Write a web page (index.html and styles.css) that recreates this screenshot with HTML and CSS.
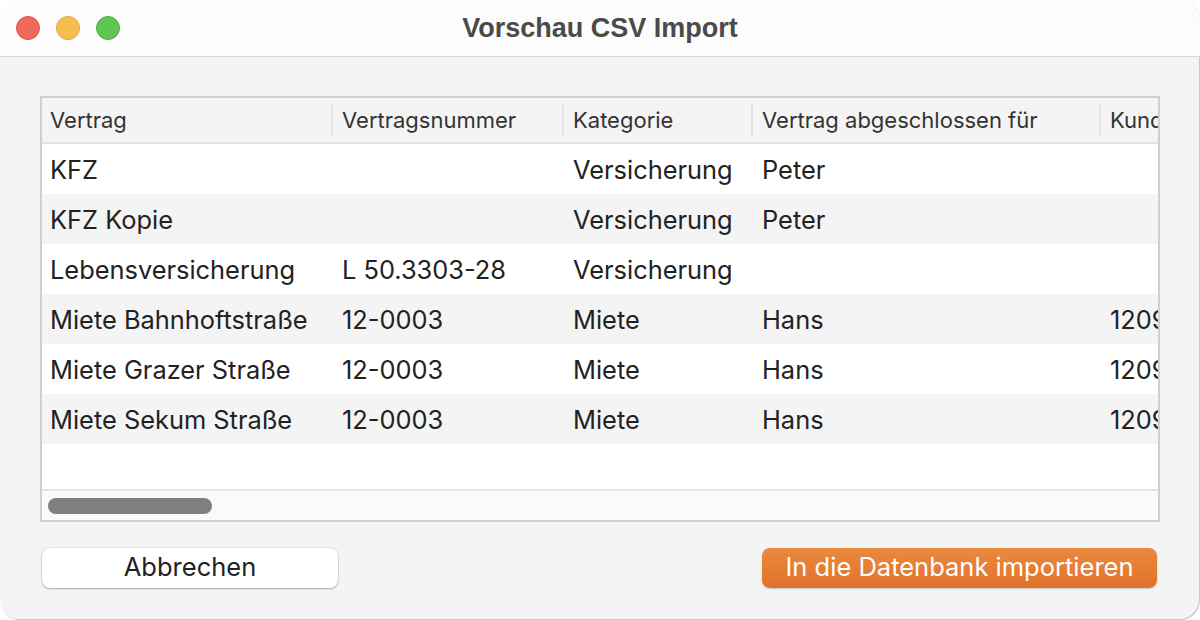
FILE: index.html
```html
<!DOCTYPE html>
<html lang="de">
<head>
<meta charset="utf-8">
<title>Vorschau CSV Import</title>
<link rel="stylesheet" href="styles.css">
</head>
<body>
<div class="window">
  <div class="titlebar">
    <div class="lights">
      <span class="light red"></span>
      <span class="light yellow"></span>
      <span class="light green"></span>
    </div>
    <div class="title">Vorschau CSV Import</div>
  </div>
  <div class="content">
    <div class="table">
      <div class="viewport">
        <div class="row head">
          <div class="cell c1">Vertrag</div>
          <div class="cell c2 sep">Vertragsnummer</div>
          <div class="cell c3 sep">Kategorie</div>
          <div class="cell c4 sep">Vertrag abgeschlossen für</div>
          <div class="cell c5 sep">Kundennummer</div>
        </div>
        <div class="row">
          <div class="cell c1">KFZ</div>
          <div class="cell c2"></div>
          <div class="cell c3">Versicherung</div>
          <div class="cell c4">Peter</div>
          <div class="cell c5"></div>
        </div>
        <div class="row alt">
          <div class="cell c1">KFZ Kopie</div>
          <div class="cell c2"></div>
          <div class="cell c3">Versicherung</div>
          <div class="cell c4">Peter</div>
          <div class="cell c5"></div>
        </div>
        <div class="row">
          <div class="cell c1">Lebensversicherung</div>
          <div class="cell c2">L 50.3303-28</div>
          <div class="cell c3">Versicherung</div>
          <div class="cell c4"></div>
          <div class="cell c5"></div>
        </div>
        <div class="row alt">
          <div class="cell c1">Miete Bahnhoftstraße</div>
          <div class="cell c2">12-0003</div>
          <div class="cell c3">Miete</div>
          <div class="cell c4">Hans</div>
          <div class="cell c5">120945</div>
        </div>
        <div class="row">
          <div class="cell c1">Miete Grazer Straße</div>
          <div class="cell c2">12-0003</div>
          <div class="cell c3">Miete</div>
          <div class="cell c4">Hans</div>
          <div class="cell c5">120945</div>
        </div>
        <div class="row alt">
          <div class="cell c1">Miete Sekum Straße</div>
          <div class="cell c2">12-0003</div>
          <div class="cell c3">Miete</div>
          <div class="cell c4">Hans</div>
          <div class="cell c5">120945</div>
        </div>
        <div class="filler"></div>
      </div>
      <div class="hscroll">
        <div class="thumb"></div>
      </div>
    </div>
    <div class="buttons">
      <button class="btn cancel">Abbrechen</button>
      <button class="btn primary">In die Datenbank importieren</button>
    </div>
  </div>
</div>
</body>
</html>
```

FILE: styles.css
```css
html, body {
  margin: 0;
  padding: 0;
  background: #ffffff;
}
body {
  font-family: "Inter", "Liberation Sans", sans-serif;
  color: #222;
}
.window {
  width: 1200px;
  height: 620px;
  border-radius: 20px;
  overflow: hidden;
  background: #f4f4f4;
  display: flex;
  flex-direction: column;
  box-sizing: border-box;
  box-shadow: inset -1px -1px 0 #c8c8c8;
}
.titlebar {
  height: 56px;
  flex: none;
  background: #fcfcfc;
  border-bottom: 1px solid #d8d8d8;
  display: flex;
  align-items: center;
  position: relative;
}
.lights {
  display: flex;
  gap: 16px;
  padding-left: 16px;
}
.light {
  width: 24px;
  height: 24px;
  border-radius: 50%;
  box-sizing: border-box;
}
.red { background: #ee6a5f; border: 1px solid #d9574d; }
.yellow { background: #f5bf4f; border: 1px solid #dea63a; }
.green { background: #61c554; border: 1px solid #4fae43; }
.title {
  position: absolute;
  left: 0;
  right: 0;
  text-align: center;
  font-family: "Liberation Sans", sans-serif;
  font-weight: bold;
  font-size: 27px;
  color: #4a4a4a;
  pointer-events: none;
}
.content {
  flex: 1;
  padding: 39px 40px 0 40px;
  display: flex;
  flex-direction: column;
}
.table {
  width: 1120px;
  height: 426px;
  box-sizing: border-box;
  border: 2px solid #cfcfcf;
  background: #ffffff;
  display: flex;
  flex-direction: column;
  overflow: hidden;
}
.viewport {
  flex: 1;
  overflow: hidden;
  display: flex;
  flex-direction: column;
}
.row {
  display: flex;
  height: 50px;
  flex: none;
  background: #ffffff;
  font-size: 25.4px;
  color: #222;
}
.row.alt {
  background: #f4f4f4;
}
.row.head {
  height: 44px;
  background: #f4f4f4;
  border-bottom: 2px solid #e2e2e2;
  font-size: 22px;
  color: #333;
}
.cell {
  flex: none;
  display: flex;
  align-items: center;
  white-space: nowrap;
  overflow: hidden;
  box-sizing: border-box;
  padding-left: 8px;
}
.head .cell.sep {
  padding-left: 0;
}
.head .cell.sep::before {
  content: "";
  width: 2px;
  height: 32px;
  background: #e3e3e3;
  margin-right: 9px;
  flex: none;
}
.c1 { width: 289px; }
.c2 { width: 231px; padding-left: 11px; }
.c3 { width: 189px; padding-left: 11px; }
.c4 { width: 348px; padding-left: 11px; }
.c5 { width: 200px; padding-left: 11px; }
.filler {
  flex: 1;
}
.hscroll {
  height: 29px;
  flex: none;
  background: #fafafa;
  border-top: 2px solid #e4e4e4;
  display: flex;
  align-items: center;
  padding-left: 6px;
}
.thumb {
  width: 164px;
  height: 16px;
  border-radius: 8px;
  background: #7f7f7f;
}
.buttons {
  display: flex;
  justify-content: space-between;
  margin-top: 26px;
  padding: 0 2px;
}
.btn {
  font-family: "Inter", "Liberation Sans", sans-serif;
  font-size: 25.5px;
  height: 40px;
  border-radius: 8px;
  border: none;
  padding: 0 0 3px 0;
  cursor: default;
}
.cancel {
  width: 296px;
  background: #ffffff;
  color: #222;
  box-shadow: 0 1px 2px rgba(0,0,0,0.25), 0 0 0 0.5px rgba(0,0,0,0.12);
}
.primary {
  width: 395px;
  margin-right: 1px;
  color: #ffffff;
  background: linear-gradient(#ea8a3f, #e2712b);
  box-shadow: 0 1px 2px rgba(0,0,0,0.2);
}
```
